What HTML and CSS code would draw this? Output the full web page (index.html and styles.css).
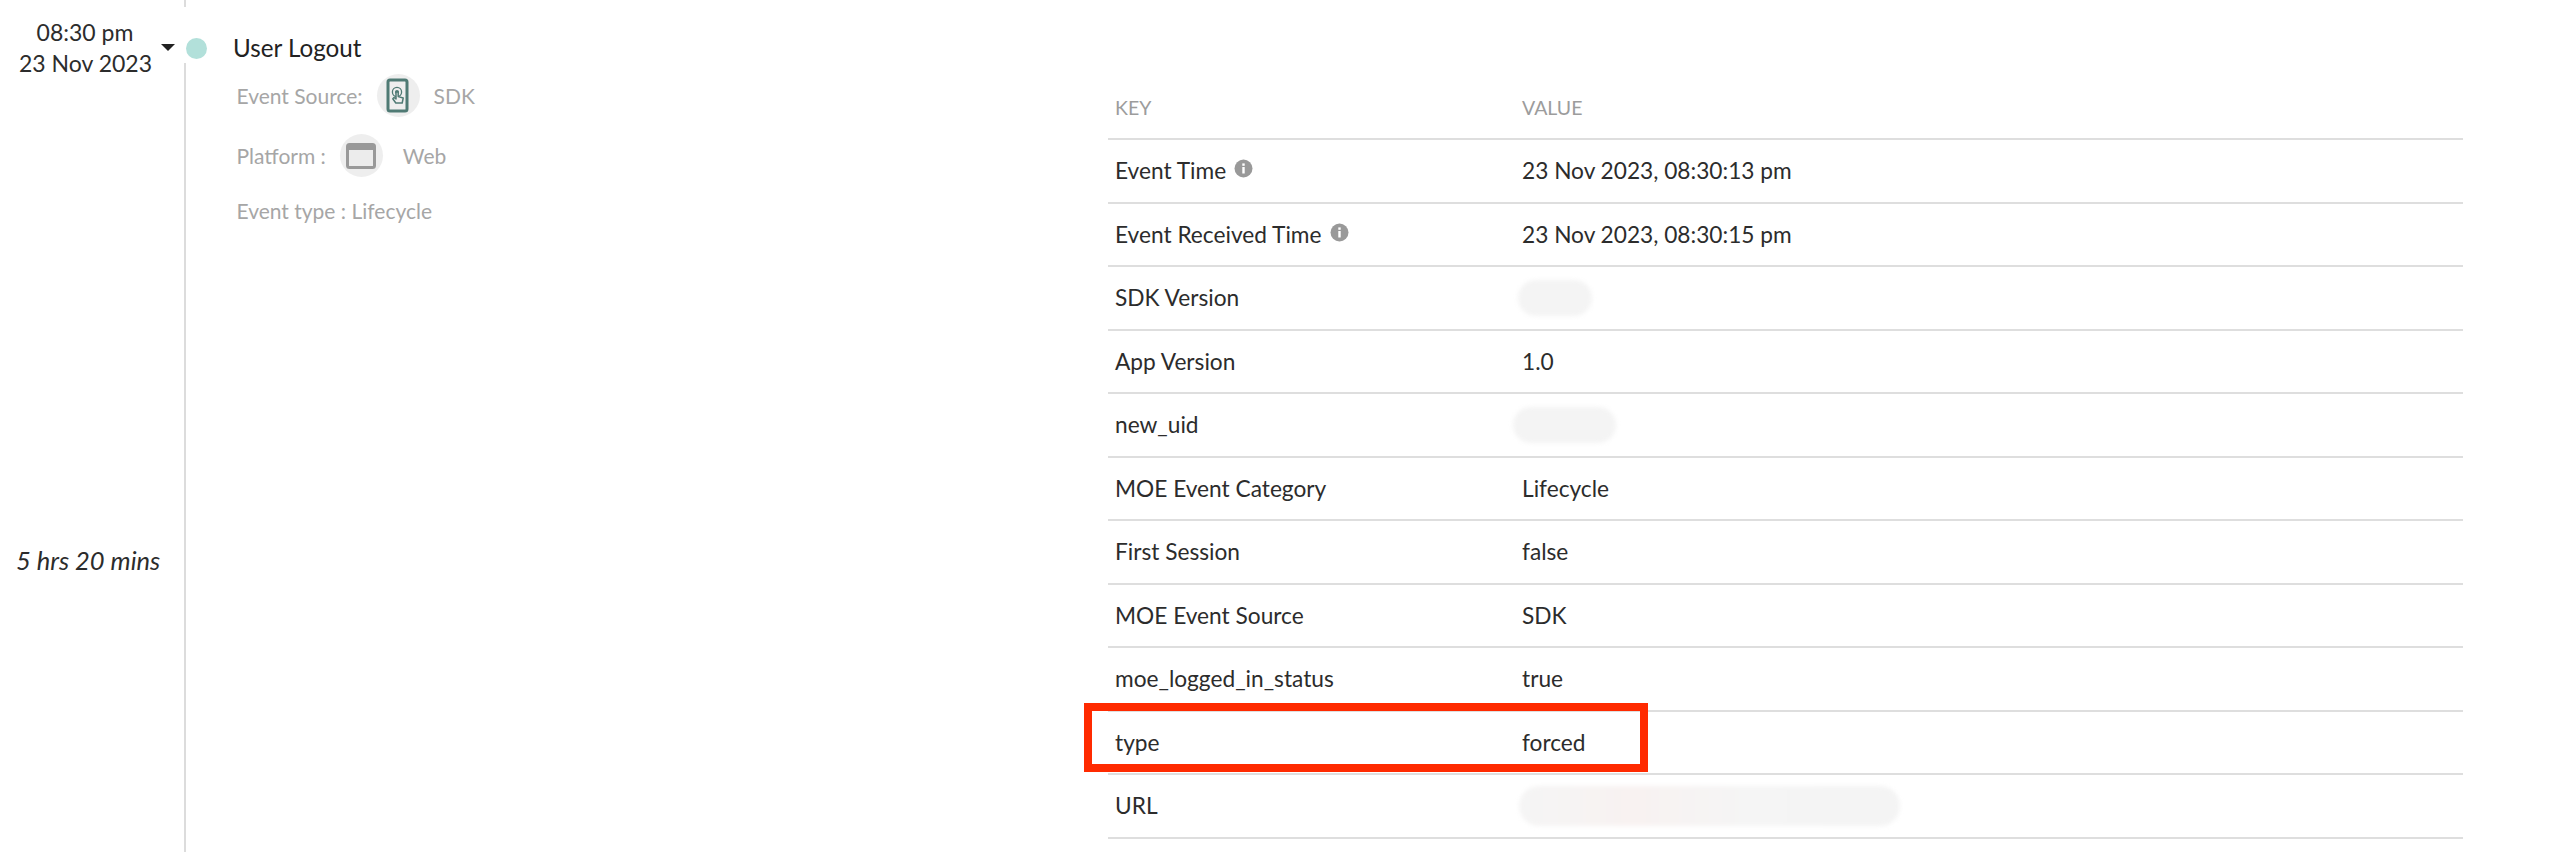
FILE: index.html
```html
<!DOCTYPE html>
<html lang="en">
<head>
<meta charset="utf-8">
<title>User Logout</title>
<link rel="stylesheet" href="styles.css">
</head>
<body>
<div class="page">
  <div class="time-col">
    <div class="when">
      <div class="when-text">
        <div>08:30 pm</div>
        <div>23 Nov 2023</div>
      </div>
      <span class="caret"></span>
    </div>
    <div class="duration">5 hrs 20 mins</div>
  </div>
  <div class="rail">
    <span class="rail-top"></span>
    <span class="rail-rest"></span>
    <span class="dot"></span>
  </div>
  <div class="summary">
    <div class="title">User Logout</div>
    <div class="meta meta-source">
      <span class="meta-label">Event Source:</span>
      <span class="badge">
        <svg width="24" height="36" viewBox="0 0 24 36" fill="none">
          <rect x="2" y="2" width="19" height="31" rx="2" stroke="#4f7a74" stroke-width="3"/>
          <circle cx="11" cy="14" r="4.6" stroke="#4f7a74" stroke-width="1.3"/>
          <circle cx="11" cy="14" r="2" fill="#4f7a74"/>
          <path d="M10 14v7l-2-1.5-1.2 1.2 3 4.3h6.4l1-5-5-1.4V14z" fill="#eeeeee" stroke="#4f7a74" stroke-width="1.5" stroke-linejoin="round"/>
        </svg>
      </span>
      <span class="meta-value">SDK</span>
    </div>
    <div class="meta meta-platform">
      <span class="meta-label">Platform :</span>
      <span class="badge">
        <svg width="30" height="26" viewBox="0 0 30 26" fill="none">
          <rect x="1.5" y="1.5" width="27" height="23" rx="2" fill="#ececec" stroke="#999999" stroke-width="3"/>
          <rect x="1.5" y="1.5" width="27" height="5.5" fill="#999999"/>
        </svg>
      </span>
      <span class="meta-value">Web</span>
    </div>
    <div class="meta meta-type">
      <span class="meta-label">Event type : Lifecycle</span>
    </div>
  </div>
  <div class="table">
    <div class="row row-head"><div class="key">KEY</div><div class="val">VALUE</div></div>
    <div class="row">
      <div class="key">Event Time
        <svg class="info" width="19" height="19" viewBox="0 0 19 19"><circle cx="9.5" cy="9.5" r="9" fill="#999999"/><rect x="8.3" y="8" width="2.4" height="6.5" fill="#fff"/><rect x="8.3" y="4.4" width="2.4" height="2.4" fill="#fff"/></svg>
      </div>
      <div class="val">23 Nov 2023, 08:30:13 pm</div>
    </div>
    <div class="row">
      <div class="key">Event Received Time
        <svg class="info" width="19" height="19" viewBox="0 0 19 19"><circle cx="9.5" cy="9.5" r="9" fill="#999999"/><rect x="8.3" y="8" width="2.4" height="6.5" fill="#fff"/><rect x="8.3" y="4.4" width="2.4" height="2.4" fill="#fff"/></svg>
      </div>
      <div class="val">23 Nov 2023, 08:30:15 pm</div>
    </div>
    <div class="row"><div class="key">SDK Version</div><div class="val"><span class="redact redact-sdk"></span></div></div>
    <div class="row"><div class="key">App Version</div><div class="val">1.0</div></div>
    <div class="row"><div class="key">new_uid</div><div class="val"><span class="redact redact-uid"></span></div></div>
    <div class="row"><div class="key">MOE Event Category</div><div class="val">Lifecycle</div></div>
    <div class="row"><div class="key">First Session</div><div class="val">false</div></div>
    <div class="row"><div class="key">MOE Event Source</div><div class="val">SDK</div></div>
    <div class="row"><div class="key">moe_logged_in_status</div><div class="val">true</div></div>
    <div class="row"><div class="key">type</div><div class="val">forced</div></div>
    <div class="row"><div class="key">URL</div><div class="val"><span class="redact redact-url"></span></div></div>
    <div class="highlight"></div>
  </div>
</div>
</body>
</html>
```

FILE: styles.css
```css
* { box-sizing: border-box; }
html, body { margin: 0; height: 852px; overflow: hidden; background: #fff; }
body { font-family: Lato, "Noto Sans", sans-serif; color: #2c2c2c; }

.page { display: flex; height: 852px; }

.time-col { width: 184px; flex: none; padding-top: 17px; }
.when { display: flex; align-items: center; }
.when-text { width: 151px; padding-left: 19px; padding-right: 0; text-align: center; font-size: 23px; line-height: 31px; white-space: nowrap; }
.caret { margin-left: 10px; margin-top: -2px; width: 0; height: 0; border-left: 7px solid transparent; border-right: 7px solid transparent; border-top: 7px solid #222; }
.duration { margin-top: 466px; padding-left: 16px; font-size: 25.5px; line-height: 30px; font-style: italic; white-space: nowrap; }

.rail { position: relative; width: 2px; flex: none; display: flex; flex-direction: column; }
.rail-top { height: 7px; background: #dcdcdc; }
.rail-rest { margin-top: 56px; flex: 1; background: #dcdcdc; }
.dot { position: absolute; left: 2px; top: 38px; width: 21px; height: 21px; border-radius: 50%; background: #b2e0da; }

.summary { width: 922px; flex: none; padding-left: 47px; padding-top: 32px; }
.title { font-size: 24.2px; line-height: 32px; color: #222; }
.meta { display: flex; align-items: center; font-size: 21px; color: #a6a6a6; padding-left: 3.5px; }
.meta-source { margin-top: 10px; height: 43px; }
.meta-platform { margin-top: 17px; height: 43px; }
.meta-type { margin-top: 18px; height: 30px; }
.badge { width: 43px; height: 43px; border-radius: 50%; background: #eeeeee; display: flex; align-items: center; justify-content: center; flex: none; }
.meta-source .badge { margin-left: 14px; }
.meta-platform .badge { margin-left: 14px; }
.meta-value { margin-left: 14px; }
.meta-platform .meta-value { margin-left: 20px; }

.table { position: relative; width: 1355px; flex: none; padding-top: 76.5px; font-size: 22.7px; }
.row { display: flex; align-items: center; height: 63.5px; border-bottom: 2px solid #dedede; padding-left: 7px; }
.key { width: 407px; flex: none; display: flex; align-items: center; gap: 8px; }
.val { flex: 1; }
.info { margin-top: -4px; }
.row-head { font-size: 19.5px; color: #9c9c9c; }

.redact { display: block; background: #f4f4f4; filter: blur(2px); }
.redact-sdk { margin-left: -4px; width: 74px; height: 36px; border-radius: 18px; }
.redact-uid { margin-left: -9px; width: 103px; height: 36px; border-radius: 18px; }
.redact-url { margin-left: -3px; width: 381px; height: 40px; border-radius: 20px; background: linear-gradient(90deg, #f5f5f5, #f8f2f1 30%, #f5f5f5 60%, #f4f4f4); }

.highlight { position: absolute; left: -24px; top: 703px; width: 564px; height: 69px; border: 8px solid #ff2a00; }
```
